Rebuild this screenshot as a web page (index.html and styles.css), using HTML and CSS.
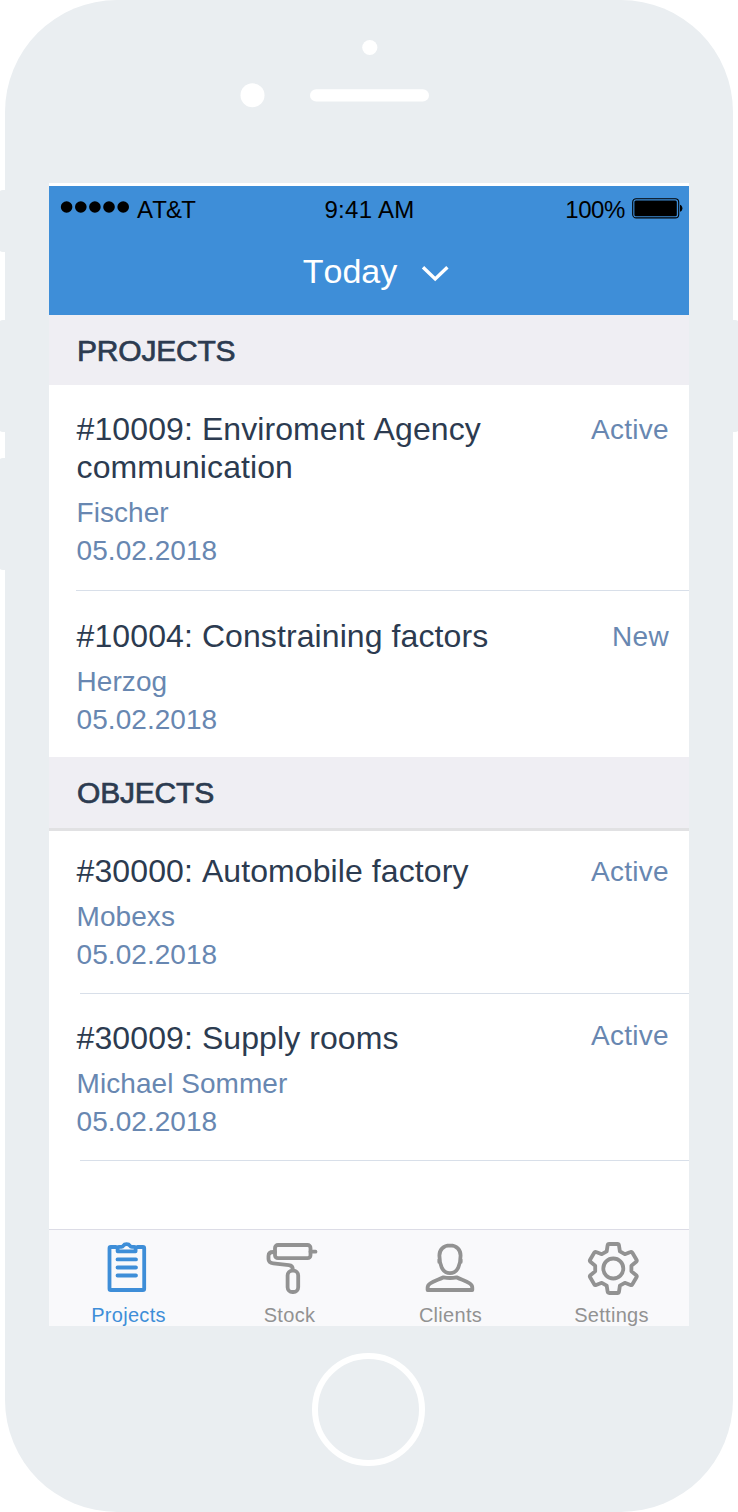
FILE: index.html
```
<!DOCTYPE html>
<html lang="en">
<head>
<meta charset="utf-8">
<title>Today</title>
<link rel="stylesheet" href="styles.css">
</head>
<body>
<div class="stage">
  <i class="key key-mute"></i><i class="key key-up"></i><i class="key key-down"></i><i class="key key-power"></i>
  <div class="phone">
    <svg class="sensors" width="728" height="183" viewBox="5 0 728 183" fill="#fff">
      <circle cx="369.8" cy="47.5" r="7.6"/><circle cx="252.5" cy="95.3" r="12"/>
      <rect x="310" y="89.2" width="119" height="12.4" rx="6.2"/>
    </svg>
    <main class="screen">
      <header class="navbar">
        <div class="status">
          <div class="carrier">
            <svg width="70" height="14" viewBox="0 0 70 14"><circle cx="6.6" cy="7" r="5.8"/><circle cx="20.8" cy="7" r="5.8"/><circle cx="34.9" cy="7" r="5.8"/><circle cx="49" cy="7" r="5.8"/><circle cx="63.2" cy="7" r="5.8"/></svg>
            <span>AT&amp;T</span>
          </div>
          <span class="clock">9:41 AM</span>
          <div class="battery">
            <span>100%</span>
            <svg width="51" height="21" viewBox="0 0 51 21"><rect x=".7" y=".7" width="46" height="19.2" rx="3.5" fill="none" stroke="#000" stroke-width="1.1"/><rect x="2.4" y="2.5" width="42.4" height="15.7" rx="1.5"/><path d="M48 6.8c3.2 1 3.2 6 0 7z"/></svg>
          </div>
        </div>
        <div class="picker"><span>Today</span><svg width="28" height="17" viewBox="0 0 28 17" fill="none" stroke="#fff" stroke-width="3.4"><path d="M2 2.3 14.2 14 26.4 2.3"/></svg></div>
      </header>
      <h2 class="section">PROJECTS</h2>
      <article class="row row-a">
        <div class="info"><h3>#10009: Enviroment Agency communication</h3><p>Fischer</p><p>05.02.2018</p></div>
        <span class="state">Active</span>
      </article>
      <article class="row row-b">
        <div class="info"><h3>#10004: Constraining factors</h3><p>Herzog</p><p>05.02.2018</p></div>
        <span class="state">New</span>
      </article>
      <h2 class="section section-ruled">OBJECTS</h2>
      <article class="row row-c">
        <div class="info"><h3>#30000: Automobile factory</h3><p>Mobexs</p><p>05.02.2018</p></div>
        <span class="state">Active</span>
      </article>
      <article class="row row-d">
        <div class="info"><h3>#30009: Supply rooms</h3><p>Michael Sommer</p><p>05.02.2018</p></div>
        <span class="state">Active</span>
      </article>
      <nav class="tabs">
        <a class="tab tab-on">
          <svg width="61" height="60" viewBox="98 1236 61 60"><path d="M116 1247h-5.200q-1.300 0-1.300 1.300v40.400q0 1.300 1.300 1.300h32.100q1.300 0 1.300-1.300v-40.400q0-1.300-1.300-1.300H137.500M117.600 1251.300v-3q0-1.500 1.500-1.500h2.200q1.300 0 2-1.100 1-1.500 3.300-1.500t3.300 1.500q.7 1.100 2 1.100h2.200q1.500 0 1.500 1.500v3zM117.500 1259.400h18.500M117.500 1267.500h18.500M117.500 1275.500h18.500"/></svg>
          <span>Projects</span>
        </a>
        <a class="tab">
          <svg width="61" height="60" viewBox="259 1236 61 60"><rect x="275" y="1245" width="35.500" height="13.200" rx="3"/><path d="M310.500 1251.700h5M275 1252h-1.700q-4.800 0-4.800 4v3q0 3.800 4.800 4.400l15.500 1.800q4 .4 4 4.300"/><rect x="287.600" y="1270.600" width="10.600" height="21.400" rx="4.800"/></svg>
          <span>Stock</span>
        </a>
        <a class="tab">
          <svg width="61" height="60" viewBox="420 1236 61 60"><path d="M450 1245.300c-6.800 0-10.600 4.700-10.600 10.200 0 4.500.8 8.700 2.300 12 1.600 3.400 4.800 5.700 8.300 5.700s6.700-2.300 8.300-5.700c1.500-3.300 2.300-7.500 2.300-12 0-5.500-3.800-10.200-10.600-10.200zM439.300 1259.500v2.500M460.700 1259.500v2.500M443.500 1277.300c4.200.9 8.800.9 13 0 4.400 2.300 9.500 3.600 13.400 6.200 1.700 1.100 2.400 2.400 2.400 4.300v2.200h-44.700v-2.200c0-1.900.8-3.200 2.500-4.300 3.900-2.600 9-3.900 13.400-6.200z"/></svg>
          <span>Clients</span>
        </a>
        <a class="tab">
          <svg width="61" height="60" viewBox="581 1236 61 60"><circle cx="613.3" cy="1268.500" r="10"/><path d="M609.2 1244h8.200q1.400 0 1.600 1.400l.9 6 4.900 2.800 5.700-2.200q1.200-.5 1.900.7l4.100 7q.7 1.200-.3 2.100l-4.800 3.900v5.600l4.800 3.900q1 .9.3 2.100l-4.100 7q-.7 1.200-1.900.7l-5.700-2.200-4.900 2.800-.9 6q-.2 1.400-1.600 1.400h-8.200q-1.400 0-1.600-1.400l-.9-6-4.900-2.800-5.700 2.200q-1.200.5-1.900-.7l-4.100-7q-.7-1.200.3-2.100l4.800-3.900v-5.600l-4.800-3.900q-1-.9-.3-2.100l4.100-7q.7-1.200 1.900-.7l5.700 2.200 4.900-2.800.9-6q.2-1.400 1.600-1.400z"/></svg>
          <span>Settings</span>
        </a>
      </nav>
    </main>
    <div class="home"></div>
  </div>
</div>
</body>
</html>
```

FILE: styles.css
```
* { box-sizing: border-box; margin: 0; padding: 0; }
body {
  background: #fff;
  font-family: "Liberation Sans", Arial, Helvetica, sans-serif;
  color: #2c3b50;
}
.stage { position: relative; width: 738px; height: 1512px; padding: 0 5px; overflow: hidden; }

/* Hardware buttons sit partly behind the case */
.key { position: absolute; width: 14px; background: #eaeef1; border-radius: 4px; }
.key-mute { left: -1px; top: 190px; height: 62px; }
.key-up { left: -1px; top: 320px; height: 112px; }
.key-down { left: -1px; top: 458px; height: 112px; }
.key-power { right: -1px; top: 320px; height: 112px; }

.phone {
  position: relative;
  display: flex;
  flex-direction: column;
  align-items: center;
  height: 1512px;
  background: #eaeef1;
  border-radius: 112px;
}
.sensors { display: block; flex: none; }
.screen {
  display: flex;
  flex-direction: column;
  flex: none;
  width: 640px;
  height: 1143px;
  background: #fff;
  border-top: 3px solid #fff;
  overflow: hidden;
}

.navbar { flex: none; height: 129px; background: #3e8ed8; }
.status {
  display: grid;
  grid-template-columns: 1fr auto 1fr;
  height: 48px;
  padding: 10px 6px 0 11px;
  font-size: 24px;
  line-height: 28px;
  color: #000;
}
.carrier { display: flex; gap: 7px; font-kerning: none; }
.carrier svg { margin-top: 4px; }
.carrier span { letter-spacing: -.8px; }
.carrier, .clock, .battery { height: 30px; }
.clock { padding-right: 4px; letter-spacing: .3px; }
.battery { display: flex; justify-content: flex-end; gap: 7px; }
.battery svg { margin-top: 2px; }
.battery span { letter-spacing: -.4px; }
.picker {
  display: flex;
  justify-content: center;
  gap: 24px;
  padding-left: 14px;
  font-size: 34px;
  line-height: 40px;
  padding-top: 17px;
  color: #fff;
  font-kerning: none;
}
.picker svg { margin-top: 14px; }

.section {
  flex: none;
  height: 70px;
  padding-left: 28px;
  background: #efeef3;
  font-size: 30px;
  font-weight: 400;
  line-height: 71px;
  letter-spacing: -.2px;
  font-kerning: none;
  -webkit-text-stroke: .7px #2c3b50;
}
.section-ruled { height: 74px; border-bottom: 3px solid #e1e1e3; }

.row {
  display: flex;
  justify-content: space-between;
  flex: none;
  margin-left: 27px;
  padding: 25px 20px 0 0;
  line-height: 38px;
  border-bottom: 1px solid #d8dfe9;
}
.row-a { height: 206px; }
.row-b { height: 166px; padding-top: 26px; border: 0; }
.row-c { height: 163px; margin-left: 31px; padding-top: 21px; }
.row-d { height: 167px; margin-left: 31px; }
.row-c .info, .row-d .info { margin-left: -4px; }
.info { width: 440px; padding-left: .6px; font-kerning: none; }
.info h3 { margin-bottom: 8px; font-size: 32px; font-weight: 400; letter-spacing: .09px; }
.info p, .state { font-size: 28px; color: #6887b1; }
.info p { letter-spacing: .05px; }
.state { margin-top: 1px; letter-spacing: .3px; }
.row-d .state { margin-top: -2px; }

.tabs {
  display: grid;
  grid-template-columns: repeat(4, 161px);
  flex: none;
  height: 97px;
  margin-top: auto;
  margin-left: -1px;
  background: #f9f9fb;
  border-top: 1px solid #dcdce6;
}
.tab { display: flex; flex-direction: column; align-items: center; color: #929292; font-size: 20px; line-height: 24px; letter-spacing: .3px; }
.tab svg { display: block; flex: none; margin-top: 6px; fill: none; stroke: currentColor; stroke-width: 3.8; stroke-linecap: round; stroke-linejoin: round; }
.tab span { margin-top: 7px; }
.tab-on { color: #3e8ed8; }

.home { width: 113px; height: 113px; margin: 27px 2px 0 0; border: 6px solid #fff; border-radius: 50%; }
```
